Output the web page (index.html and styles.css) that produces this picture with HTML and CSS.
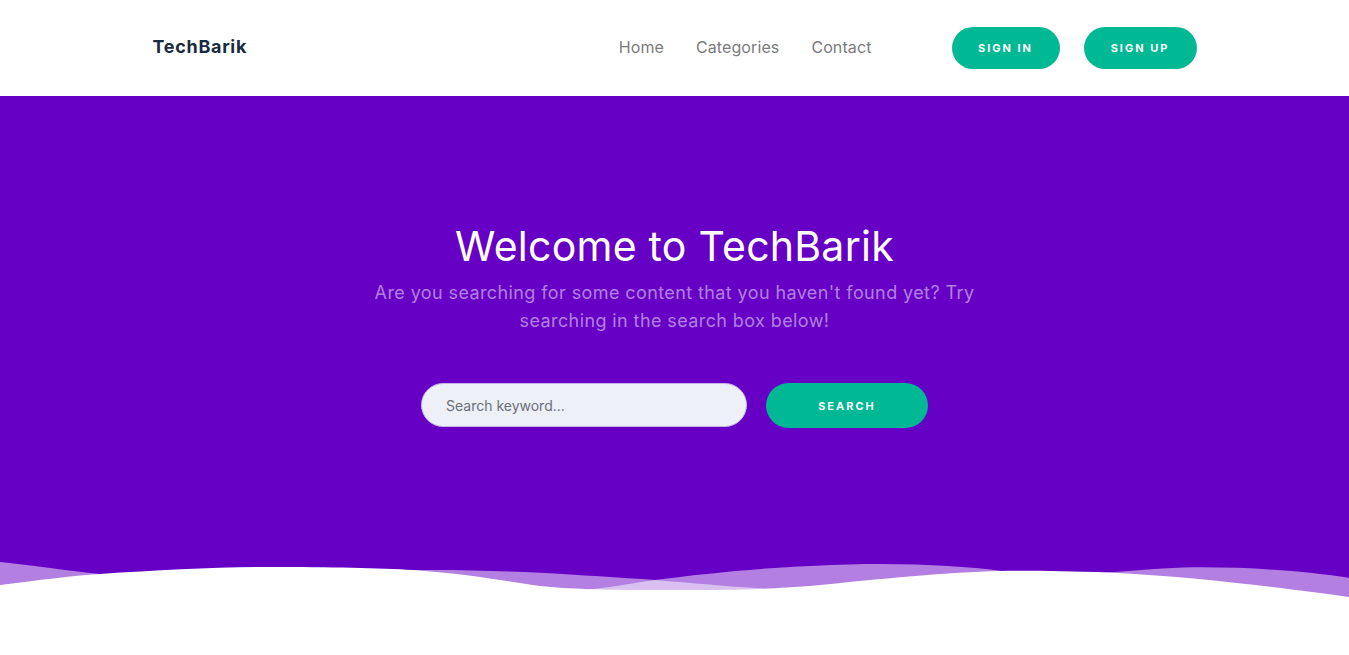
FILE: index.html
```html
<!DOCTYPE html>
<html lang="en">
<head>
<meta charset="utf-8">
<title>TechBarik</title>
<link rel="stylesheet" href="styles.css">
</head>
<body>
<header class="header">
  <div class="container header-inner">
    <a class="logo" href="#">TechBarik</a>
    <nav class="nav">
      <a class="nav-link" href="#">Home</a>
      <a class="nav-link" href="#">Categories</a>
      <a class="nav-link" href="#">Contact</a>
    </nav>
    <div class="auth">
      <a class="btn btn-signin" href="#">SIGN IN</a>
      <a class="btn btn-signup" href="#">SIGN UP</a>
    </div>
  </div>
</header>
<section class="hero">
  <div class="hero-content">
    <h1 class="hero-title">Welcome to TechBarik</h1>
    <p class="hero-sub">Are you searching for some content that you haven't found yet? Try searching in the search box below!</p>
    <form class="search">
      <input class="search-input" type="text" placeholder="Search keyword...">
      <button class="btn btn-search" type="button">SEARCH</button>
    </form>
  </div>
  <svg class="wave" viewBox="0 0 1349 60" preserveAspectRatio="none" aria-hidden="true">
    <path class="wave-a" d="M0,42 C100,36 250,22 413,20 C460,19.5 500,21 540,22.7 C580,25 620,27.5 655,30 C690,33 730,36.5 760,38.3 C800,41 840,42 870,41 C930,39 960,34 1000,30 C1030,27 1060,25 1110,22.5 C1150,19 1180,17.3 1200,17.3 C1260,17.3 1310,22 1349,27.7 L1349,60 L0,60 Z"/>
    <path class="wave-b" d="M0,12 C30,15 70,21 100,24 C200,34 450,44 560,41 C600,40 620,35 655,30 C700,24 760,18 810,16 C840,14.5 860,14 880,14 C930,14 970,17 1000,20.7 C1100,32 1250,48 1349,58 L1349,60 L0,60 Z"/>
    <path class="wave-c" d="M0,35 C40,30 70,26 100,24 C160,20 220,17 270,17 C330,17 380,18 413,20 C470,24 510,32 540,36 C570,39 600,40 655,40 C700,40 740,40 760,39 C780,38 795,37 810,36 C880,29 950,22 1000,21 C1030,20.5 1060,21 1110,22.5 C1200,27 1290,39 1349,47 L1349,60 L0,60 Z"/>
  </svg>
</section>
</body>
</html>
```
FILE: styles.css
```css
* { box-sizing: border-box; }
html, body { margin: 0; padding: 0; }
body {
  font-family: Inter, "Noto Sans", Arial, sans-serif;
  background: #ffffff;
  color: #1b2a41;
}
a { text-decoration: none; }

.container {
  width: 1044px;
  margin: 0 auto;
}

.header {
  height: 96px;
  background: #ffffff;
}
.header-inner {
  height: 96px;
  display: flex;
  align-items: center;
}
.logo {
  font-size: 18px;
  line-height: 22px;
  margin-bottom: 2px;
  font-weight: 700;
  color: #1b2a41;
  letter-spacing: 0.7px;
}
.nav {
  margin-left: auto;
  display: flex;
  gap: 32px;
  margin-bottom: 2px;
}
.nav-link {
  font-size: 16px;
  line-height: 20px;
  color: #7b7b7b;
  letter-spacing: 0.1px;
}
.auth {
  display: flex;
  gap: 24px;
  margin-left: 80px;
}
.btn {
  display: inline-flex;
  align-items: center;
  justify-content: center;
  background: #00b894;
  color: #ffffff;
  font-size: 11px;
  font-weight: 700;
  letter-spacing: 2px;
  border-radius: 999px;
  border: none;
  font-family: inherit;
}
.btn-signin { width: 108px; height: 42px; }
.btn-signup { width: 113px; height: 42px; }

.hero {
  background: #6600c5;
  display: flex;
  flex-direction: column;
}
.hero-content {
  padding-top: 126px;
  display: flex;
  flex-direction: column;
  align-items: center;
  text-align: center;
}
.hero-title {
  margin: 0;
  font-size: 41px;
  line-height: 48px;
  font-weight: 400;
  letter-spacing: 0.25px;
  color: #ffffff;
}
.hero-sub {
  margin: 9px 0 0;
  width: 620px;
  font-size: 18px;
  line-height: 28px;
  letter-spacing: 0.4px;
  color: rgba(255, 255, 255, 0.5);
}
.search {
  margin: 48px 0 0;
  display: flex;
  gap: 19px;
}
.search-input {
  width: 326px;
  height: 44px;
  border-radius: 22px;
  border: 1px solid #c7b3ea;
  background: #edf0f7;
  padding: 0 24px;
  font-family: inherit;
  font-size: 14px;
  color: #333;
  outline: none;
}
.search-input::placeholder { color: #6b6f7b; }
.btn-search { width: 162px; height: 45px; }

.wave {
  display: block;
  width: 100%;
  height: 60px;
  margin-top: 122px;
}
.wave-a, .wave-b { fill: rgba(255, 255, 255, 0.5); }
.wave-c { fill: #ffffff; }
```
